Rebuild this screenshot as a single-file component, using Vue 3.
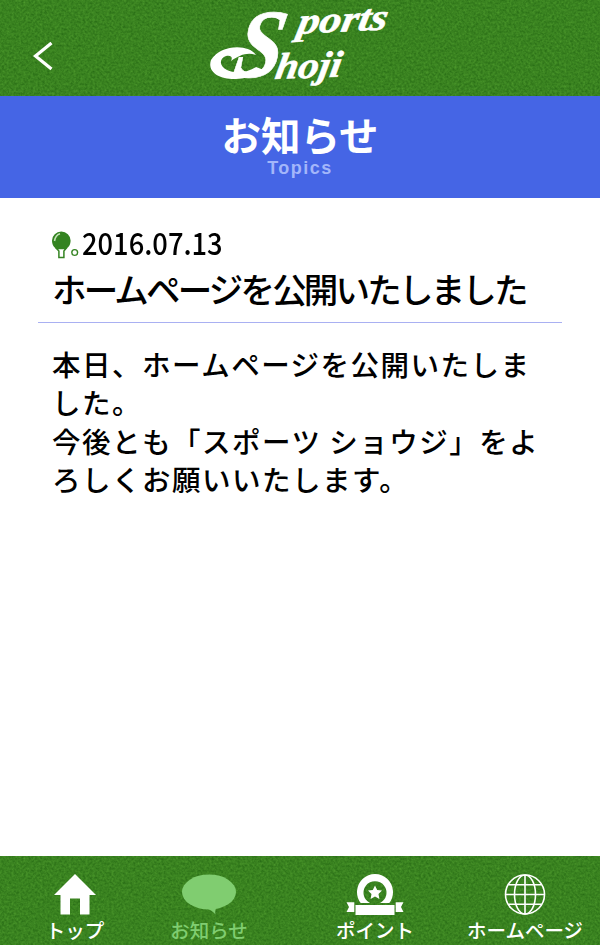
<template>
  <div class="page">
    <svg class="defs" width="0" height="0" aria-hidden="true">
      <filter id="grass" x="0" y="0" width="100%" height="100%" color-interpolation-filters="sRGB">
        <feTurbulence type="fractalNoise" baseFrequency="0.42" numOctaves="2" seed="7" />
        <feColorMatrix
          values="0.16 0.05 0 0 0.12
                  0.2 0.05 0 0 0.385
                  0.1 0.03 0 0 0.06
                  0 0 0 0 1"
        />
      </filter>
    </svg>

    <header class="header">
      <svg class="turf" width="100%" height="100%"><rect width="100%" height="100%" filter="url(#grass)" /></svg>
      <button class="back" aria-label="戻る">
        <svg width="22" height="32" viewBox="0 0 22 32">
          <path d="M19.5 3 L3.5 16 L19.5 29" fill="none" stroke="#fff" stroke-width="3.2" />
        </svg>
      </button>
      <svg class="logo" width="190" height="96" viewBox="205 0 190 96">
        <!-- swash that curls out of the capital's foot -->
        <path
          d="M256 55 C249 44 221 44 211 60 C207 72 219 79.5 236 79 C249 78 258 75 264 70 L256 67 C247 73 235 74 227 70 C218 65 220 58 226 56 C231 55 233 57 231 61 C240 55 247 52 256 55 Z"
          fill="#fff"
        />
        <g class="logo-text">
          <text class="logo-cap" transform="translate(231 77) skewX(-11)" textLength="48" lengthAdjust="spacingAndGlyphs">S</text>
          <text transform="translate(296 34) rotate(-3) skewX(-14)" textLength="90" lengthAdjust="spacingAndGlyphs">ports</text>
          <text transform="translate(274 79) rotate(-2) skewX(-12)" textLength="66" lengthAdjust="spacingAndGlyphs">hoji</text>
        </g>
      </svg>
    </header>

    <div class="heading">
      <h1>お知らせ</h1>
      <p>Topics</p>
    </div>

    <main class="article">
      <div class="article-head">
        <div class="date">
          <svg width="28" height="28" viewBox="0 0 28 28">
            <path d="M6.5 19 C2 17 0 14 0 9.5 A9.3 9 0 0 1 18.6 9.5 C18.6 14 16.5 17 12 19 Z" fill="#348321" />
            <path d="M2.5 10 Q3.5 4 8 2.8" fill="none" stroke="#c4e4b7" stroke-width="1.6" />
            <path d="M4.5 17.5 H14 L11.9 20 V26.5 H6.9 V20 Z" fill="#fff" stroke="#348321" stroke-width="1.5" />
            <circle cx="22.7" cy="21.5" r="2.9" fill="none" stroke="#348321" stroke-width="1.4" />
          </svg>
          <span>2016.07.13</span>
        </div>
        <h2>ホームページを公開いたしました</h2>
      </div>
      <p class="body">本日、ホームページを公開いたしま<br />した。<br />今後とも「スポーツ ショウジ」をよ<br />ろしくお願いいたします。</p>
    </main>

    <nav class="tabs">
      <svg class="turf" width="100%" height="100%"><rect width="100%" height="100%" filter="url(#grass)" /></svg>
      <a v-for="tab in tabs" :key="tab.id" class="tab" :class="[tab.id, { active: tab.id === current }]">
        <svg v-if="tab.id === 'top'" width="42" height="42" viewBox="0 0 42 42">
          <path d="M21 0 L42 21 H35.5 V40.5 H26 V24.5 H16 V40.5 H6.5 V21 H0 Z" fill="currentColor" />
        </svg>
        <svg v-else-if="tab.id === 'news'" width="56" height="42" viewBox="0 0 56 42">
          <ellipse cx="28" cy="18" rx="27" ry="17.5" fill="currentColor" />
          <path d="M25 34 Q31 36 34.5 40.5 Q33.5 36 36 33 Z" fill="currentColor" />
        </svg>
        <svg v-else-if="tab.id === 'point'" width="58" height="42" viewBox="0 0 58 42">
          <path
            fill-rule="evenodd"
            d="M14.7 29 A18 18 0 1 1 43.3 29 Z M24 29 H34 A11.5 11.5 0 1 0 24 29 Z"
            fill="currentColor"
          />
          <path d="M29 11.5 L31.2 16 L36 16.6 L32.5 20 L33.4 25 L29 22.6 L24.6 25 L25.5 20 L22 16.6 L26.8 16 Z" fill="currentColor" />
          <path d="M9.5 31 H48.5 V41 H9.5 Z M0.5 28.3 H8.3 V38 H0.5 L3 33 Z M57.5 28.3 H49.7 V38 H57.5 L55 33 Z" fill="currentColor" />
        </svg>
        <svg v-else width="42" height="42" viewBox="0 0 42 42">
          <g fill="none" stroke="currentColor" stroke-width="1.6">
            <circle cx="21" cy="20.5" r="19.5" />
            <ellipse cx="21" cy="20.5" rx="10.5" ry="19.5" />
            <path d="M21 1 V40 M1.5 20.5 H40.5 M4.5 10.8 H37.5 M4.5 30.2 H37.5" />
          </g>
        </svg>
        <span>{{ tab.label }}</span>
      </a>
    </nav>
  </div>
</template>

<script setup>
import { ref } from 'vue'

const current = ref('news')

const tabs = [
  { id: 'top', label: 'トップ' },
  { id: 'news', label: 'お知らせ' },
  { id: 'point', label: 'ポイント' },
  { id: 'home', label: 'ホームページ' }
]
</script>

<style>
body {
  margin: 0;
}
</style>

<style scoped>
.page {
  display: flex;
  flex-direction: column;
  height: 945px;
  background: #fff;
  color: #000;
  font-family: "Noto Sans CJK JP", sans-serif;
  overflow: hidden;
}

.defs {
  position: absolute;
}

.header,
.tabs {
  position: relative;
  flex-shrink: 0;
  background: #37801f;
}

.turf {
  position: absolute;
  inset: 0;
}

.header {
  display: flex;
  height: 96px;
}

.back {
  position: relative;
  width: 205px;
  padding: 16px 0 0 32px;
  border: 0;
  background: none;
  text-align: left;
}

.back svg,
.logo {
  display: block;
}

.logo {
  position: relative;
  overflow: visible;
}

.logo-text {
  fill: #fff;
  stroke: #fff;
  stroke-width: 0.6px;
  font: italic bold 37px "Liberation Serif", serif;
}

.logo-cap {
  font-size: 98px;
}

.heading {
  flex-shrink: 0;
  height: 102px;
  background: #4565e5;
  text-align: center;
}

.heading h1 {
  margin: 13px 0 0;
  color: #fff;
  font-size: 39.5px;
  line-height: 50px;
  font-weight: 700;
}

.heading p {
  margin: 0;
  color: #a3b6fa;
  font: bold 18px/18px "Liberation Sans", sans-serif;
  letter-spacing: 1.5px;
}

.article {
  flex: 1;
  padding: 23px 38px 0;
}

.article-head {
  height: 101px;
  padding-left: 14px;
  border-bottom: 1.5px solid #a9b0f2;
}

.date {
  display: flex;
  align-items: center;
  height: 42px;
}

.date svg {
  margin-top: 6px;
}

.date span {
  margin-left: 2px;
  font-size: 31px;
  line-height: 40px;
  font-weight: 500;
  transform: scaleX(0.88);
  transform-origin: 0 50%;
}

.article h2 {
  margin: 0;
  font-size: 34.5px;
  line-height: 50px;
  font-weight: 500;
  letter-spacing: -2.8px;
  white-space: nowrap;
}

.body {
  margin: 22px 0 0 14px;
  font-size: 28.5px;
  line-height: 38.4px;
  font-weight: 500;
  letter-spacing: 1.5px;
  white-space: nowrap;
}

.tabs {
  display: flex;
  height: 89px;
}

.tab {
  position: relative;
  display: flex;
  flex-direction: column;
  align-items: center;
  padding-top: 18px;
  color: #fff;
}

.tab span {
  font-size: 19.5px;
  line-height: 27px;
  font-weight: 500;
  white-space: nowrap;
}

.top {
  width: 56px;
  margin-left: 47px;
}

.news {
  width: 80px;
  margin-left: 66px;
}

.point {
  width: 76px;
  margin-left: 88px;
}

.home {
  width: 118px;
  margin-left: 53px;
}

.active {
  color: #80cd70;
}
</style>
